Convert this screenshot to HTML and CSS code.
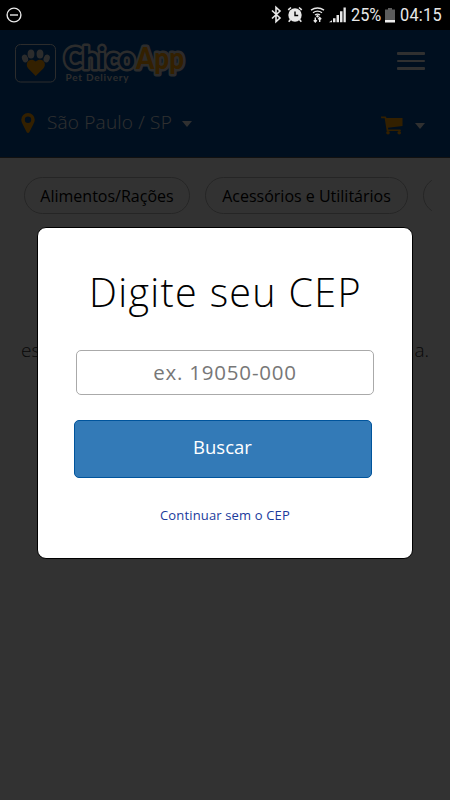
FILE: index.html
```html
<!DOCTYPE html>
<html lang="pt-BR">
<head>
    <meta charset="UTF-8">
    <meta name="viewport" content="width=device-width, initial-scale=1.0">
    <title>ChicoApp Pet Delivery</title>
    <link rel="stylesheet" href="styles.css">
</head>
<body>

    <div class="statusbar">
        <svg class="status-dnd" width="16" height="16" viewBox="0 0 16 16">
            <circle cx="8" cy="8" r="6.9"/>
            <path d="M4 8h8"/>
        </svg>
        <div class="status-right">
            <svg class="status-icons" width="80" height="20" viewBox="0 0 80 20">
                <!-- bluetooth -->
                <path class="line" d="M2 5.500l8 7.500-4 3.700V2.300l4 3.700-8 7.500"/>
                <!-- alarm -->
                <circle class="fill" cx="25" cy="10" r="6.700"/>
                <path class="line" d="M18.200 4.800l2.800-2.300M31.800 4.800l-2.800-2.300M20.500 14.500l-1.800 2.300M29.500 14.500l1.800 2.300"/>
                <path class="hands" d="M25 6.500v4h3.200"/>
                <!-- wifi -->
                <path class="wave" d="M41 5.200q6.500-4.500 13 0M43 7.700q4.500-3.200 9 0M45 10q2.500-1.800 5 0"/>
                <path class="wave" d="M45.300 17v-4.500M43.800 15.200l1.500 1.800 1.500-1.800M49.700 12.500v4.500M48.200 14.200l1.500-1.700 1.500 1.700"/>
                <circle class="fill" cx="47.500" cy="11.300" r="1.200"/>
                <!-- signal -->
                <path class="fill" d="M59 17.200l3-2v2zM63 13.300h2.500v3.900h-2.500zM66.500 10h2.500v7.200h-2.500zM70 6.200h2.500v11h-2.500zM73.500 2.500h2.300v14.700h-2.300z"/>
            </svg>
            <span class="percent">25%</span>
            <span class="battery"></span>
            <span class="clock">04:15</span>
        </div>
    </div>

    <div class="page">
        <header class="header">
            <div class="topline">
                <svg class="logo" width="175" height="46" viewBox="0 0 175 46">
                    <rect class="logo-box" x=".5" y="4.500" width="40" height="37.500" rx="5"/>
                    <g class="logo-paw">
                        <ellipse cx="10" cy="18.500" rx="3" ry="3.900" transform="rotate(-20 10 18.500)"/>
                        <ellipse cx="16" cy="13.900" rx="3.400" ry="4.500"/>
                        <ellipse cx="25" cy="13.900" rx="3.400" ry="4.500"/>
                        <ellipse cx="31.700" cy="18.500" rx="3" ry="3.900" transform="rotate(20 31.700 18.500)"/>
                    </g>
                    <path class="logo-heart" d="M20.700 36L13.300 28.500C9 23 15 16.500 20.700 21.500C26.500 16.500 33 23 28.300 28.500Z"/>
                    <text class="logo-name chico" x="49" y="28.500" textLength="71" lengthAdjust="spacingAndGlyphs">Chico</text>
                    <text class="logo-name app" x="121" y="28.500" textLength="48" lengthAdjust="spacingAndGlyphs">App</text>
                    <text class="logo-sub" x="50.500" y="41" textLength="63" lengthAdjust="spacing">Pet Delivery</text>
                </svg>
                <div class="menu">
                    <span></span>
                    <span></span>
                    <span></span>
                </div>
            </div>
            <div class="location">
                <svg class="pin" width="14" height="20" viewBox="0 0 14 20">
                    <path fill-rule="evenodd" d="M7 0a6.700 6.700 0 0 1 6.700 6.800c0 2.200-1 3.500-1.500 4.600L8.300 19.200q-1.300 1.400-2.600 0L1.800 11.400C1.300 10.300.3 9 .3 6.800A6.700 6.700 0 0 1 7 0zm0 3.500a3.200 3.200 0 1 0 0 6.400a3.200 3.200 0 1 0 0-6.400z"/>
                </svg>
                <span class="city">São Paulo / SP</span>
                <span class="caret"></span>
                <svg class="cart" width="22" height="19" viewBox="0 0 22 19">
                    <path d="M0 .5h4.500q.6 0 .7.700L5.400 2H21.500v8L7 11.800l.3 1.700H19q.8 0 .8.700v.8H6.300q-.6 0-.7-.6L3.700 2.200H.2z"/>
                    <circle cx="7" cy="16.700" r="1.800"/>
                    <circle cx="18.200" cy="16.700" r="1.800"/>
                </svg>
                <span class="caret caret-cart"></span>
            </div>
        </header>

        <nav class="categories">
            <a class="pill pill-food">Alimentos/Rações</a>
            <a class="pill pill-acc">Acessórios e Utilitários</a>
            <a class="pill pill-next"></a>
        </nav>

        <p class="message"><span>es</span><span>a.</span></p>
    </div>

    <div class="overlay">
        <form class="modal">
            <h1>Digite seu CEP</h1>
            <input type="text" class="cep" placeholder="ex. 19050-000">
            <button type="button" class="search">Buscar</button>
            <a class="skip">Continuar sem o CEP</a>
        </form>
    </div>

</body>
</html>
```

FILE: styles.css
```css
* {
    box-sizing: border-box;
}

body {
    margin: 0;
    height: 800px;
    overflow: hidden;
    background-color: #fafafa;
    font-family: "Open Sans", "Noto Sans", sans-serif;
    font-weight: 300;
}

.statusbar {
    display: flex;
    justify-content: space-between;
    align-items: center;
    height: 30px;
    padding: 0 8px 0 6px;
    background-color: #000;
    color: #e8e8e8;
    font: 400 18.500px/30px Roboto, sans-serif;
}

.status-dnd {
    fill: none;
    stroke: #e8e8e8;
    stroke-width: 1.400;
}

.status-right {
    display: flex;
    align-items: center;
}

.status-icons {
    margin-bottom: 1px;
    margin-right: 1px;
}

.status-icons .line {
    fill: none;
    stroke: #e8e8e8;
    stroke-width: 1.600;
}

.status-icons .fill {
    fill: #e8e8e8;
}

.status-icons .hands {
    fill: none;
    stroke: #000;
    stroke-width: 1.400;
}

.status-icons .wave {
    fill: none;
    stroke: #e8e8e8;
    stroke-width: 1.400;
}

.percent,
.clock {
    display: inline-block;
    transform: scaleX(0.88);
    transform-origin: 0 50%;
    white-space: nowrap;
}

.percent {
    width: 34px;
}

.clock {
    width: 42px;
    letter-spacing: 0.3px;
}

.battery {
    width: 10px;
    height: 15px;
    margin-right: 5px;
    background: linear-gradient(#5c5c5c 12px, #eee 12px);
    clip-path: polygon(0 2px, 3px 2px, 3px 0, 7px 0, 7px 2px, 100% 2px, 100% 100%, 0 100%);
}

.header {
    height: 128px;
    background-color: #004b9b;
    border-bottom: 1px solid #555;
}

.topline {
    display: flex;
    justify-content: space-between;
    align-items: flex-start;
    height: 64px;
    padding: 10px 25px 0 15px;
}

.logo {
    overflow: visible;
}

.logo-box {
    fill: none;
    stroke: #ddd;
    stroke-width: 1;
}

.logo-paw {
    fill: #ddd;
}

.logo-heart {
    fill: #ff9f00;
}

.logo-name {
    font: 900 30px Lato, sans-serif;
    stroke: #ddd;
    stroke-width: 5;
    stroke-linejoin: round;
    paint-order: stroke;
}

.chico {
    fill: #004b9b;
}

.app {
    fill: #ff9f00;
}

.logo-sub {
    fill: #ddd;
    font: 700 10px Lato, sans-serif;
}

.menu {
    display: flex;
    flex-direction: column;
    gap: 5px;
    padding-top: 12px;
}

.menu span {
    width: 28px;
    height: 2.500px;
    border-radius: 1px;
    background-color: #eee;
}

.location {
    display: flex;
    align-items: center;
    height: 58px;
    padding: 0 24px 0 21px;
    color: #eee;
}

.pin,
.cart {
    fill: #ff9f00;
}

.city {
    width: 127px;
    margin-left: 12px;
    margin-right: 8px;
    padding-bottom: 2px;
    font-size: 19px;
    letter-spacing: 0.2px;
    white-space: nowrap;
}

.caret {
    margin-top: 2px;
    border: 5.500px solid transparent;
    border-top: 6px solid #eee;
    border-bottom: 0;
}

.cart {
    margin-left: auto;
    margin-right: 12px;
    margin-top: 4px;
}

.caret-cart {
    margin-top: 6px;
    margin-right: 1px;
}

.categories {
    display: flex;
    gap: 15px;
    margin: 19px 18px 0;
    padding-left: 6px;
    overflow: hidden;
}

.pill {
    flex: none;
    height: 37px;
    border: 1px solid #b8b8b8;
    border-radius: 19px;
    color: #000;
    font-size: 16px;
    font-weight: 400;
    line-height: 36px;
    text-align: center;
    white-space: nowrap;
}

.pill-food {
    width: 166px;
}

.pill-acc {
    width: 203px;
}

.pill-next {
    width: 120px;
}

.message {
    display: flex;
    justify-content: space-between;
    margin: 123px 21px 0;
    color: #333;
    font-size: 19px;
}

.overlay {
    position: absolute;
    top: 30px;
    left: 0;
    width: 450px;
    height: 770px;
    padding: 197px 37px 0;
    background-color: rgba(0, 0, 0, 0.8);
}

.modal {
    display: flex;
    flex-direction: column;
    align-items: center;
    height: 332px;
    border: 1px solid #000;
    border-radius: 9px;
    background-color: #fff;
}

h1 {
    margin: 36px 0 30px;
    padding-left: 1px;
    color: #000;
    font-size: 39.500px;
    font-weight: 300;
    letter-spacing: 1.300px;
    line-height: 56px;
}

.cep {
    width: 298px;
    height: 45px;
    padding-bottom: 3px;
    border: 1px solid #aaa;
    border-radius: 5px;
    font: 400 20.500px "Open Sans", sans-serif;
    letter-spacing: 0.800px;
    text-align: center;
}

.cep::placeholder {
    color: #777;
}

.search {
    width: 298px;
    height: 58px;
    margin: 25px 5px 0 0;
    padding-bottom: 6px;
    border: 1px solid #00549c;
    border-radius: 5px;
    background-color: #337ab7;
    color: #fff;
    font: 400 18.500px "Open Sans", sans-serif;
}

.skip {
    margin-top: 28px;
    color: #1a3a9c;
    font-size: 13px;
    font-weight: 400;
    letter-spacing: 0.150px;
    line-height: 18px;
}
```
